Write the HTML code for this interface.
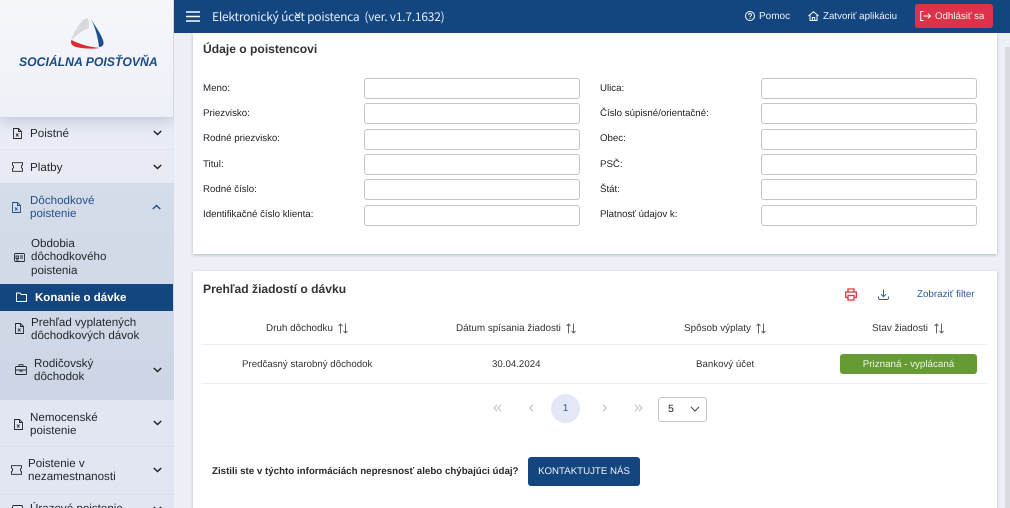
<!DOCTYPE html>
<html lang="sk"><head><meta charset="utf-8"><title>Elektronický účet poistenca</title>
<style>
*{box-sizing:border-box;text-rendering:geometricPrecision}
html,body{margin:0;padding:0;width:1010px;height:508px;overflow:hidden}
body{position:relative;background:#eef0f7;font-family:"Liberation Sans",sans-serif;color:#222}
.a{position:absolute}
.t{position:absolute;white-space:nowrap}
.side{position:absolute;left:0;top:0;width:174px;height:508px;background:#e4e8f3;overflow:hidden}
.logo{position:absolute;left:0;top:0;width:173px;height:117px;background:linear-gradient(180deg,#f6f7fb,#eef0f7);box-shadow:0 4px 14px rgba(90,100,130,.28)}
.nt{font-size:11.6px;line-height:13.4px;position:absolute;color:#25272c;white-space:nowrap}
.lab{position:absolute;font-size:9.7px;color:#222;white-space:nowrap;line-height:12px;margin-top:.7px}
.inp{position:absolute;width:216px;height:21px;background:#fff;border:1px solid #c3c5c9;border-radius:3px}
.card{position:absolute;left:193px;width:804px;background:#fff;box-shadow:0 1px 3px rgba(70,80,110,.35)}
.th{position:absolute;font-size:9.9px;color:#333;white-space:nowrap;line-height:12px}
.td{position:absolute;font-size:9.7px;color:#333;white-space:nowrap;line-height:12px}
svg{position:absolute;overflow:visible}
</style></head><body>

<div class="card" style="top:33px;height:221px"></div>
<div class="card" style="top:271px;height:240px"></div>
<div class="a" style="left:1005px;top:47px;width:5px;height:461px;background:#d9dbe1"></div>

<div class="a" style="left:173px;top:0;width:837px;height:33px;background:#13457f"></div>
<svg style="left:186px;top:11px" width="14" height="11" fill="none" stroke="#fff" stroke-width="1.6"><path d="M0 1h14M0 5.500h14M0 10h14"/></svg>
<div class="t" style="left:212px;top:9px;font-size:12px;letter-spacing:-.23px;line-height:15px;color:#e4ebf5;font-family:'Noto Sans CJK SC','Liberation Sans',sans-serif">Elektronický účet poistenca&nbsp; (ver. v1.7.1632)</div>
<svg style="left:745px;top:11px" width="10" height="10" fill="none" stroke="#fff" stroke-width="1"><circle cx="5" cy="5" r="4.500"/><path d="M3.600 4c0-2 2.900-1.900 2.900-.1 0 1.100-1.500 1.100-1.500 2.300M5 7.100v.8"/></svg>
<div class="t" style="left:759px;top:10px;font-size:10px;line-height:14px;color:#eef2f8">Pomoc</div>
<svg style="left:808px;top:11px" width="11" height="10" fill="none" stroke="#fff" stroke-width="1"><path d="M.5 5 5.500.8 10.500 5M2 4v5.500h7V4M4.300 9.500V6.500h2.400v3"/></svg>
<div class="t" style="left:823px;top:10px;font-size:9.750px;line-height:14px;color:#eef2f8">Zatvoriť aplikáciu</div>
<div class="a" style="left:915px;top:4px;width:78px;height:24px;background:#dd3249;border-radius:3px"></div>
<svg style="left:920px;top:11px" width="11" height="10" fill="none" stroke="#fff" stroke-width="1"><path d="M3.500.5H.7v9h2.800M3.500 5h7M8 2.700 10.500 5 8 7.300"/></svg>
<div class="t" style="left:935px;top:10px;font-size:9.700px;line-height:14px;color:#f8eef0">Odhlásiť sa</div>

<div class="side">
  <div class="a" style="left:0;top:117px;width:173px;height:33px;background:#e9ecf5;border-bottom:1px solid #e1e4ee"></div>
  <div class="a" style="left:0;top:150px;width:173px;height:33px;background:#e8ebf4"></div>
  <div class="a" style="left:0;top:183px;width:174px;height:217px;background:linear-gradient(180deg,#d5dcea,#cdd6e5)"></div>
  <div class="a" style="left:0;top:400px;width:174px;height:108px;background:#e2e5f2"></div>
  <div class="a" style="left:0;top:446px;width:174px;height:1px;background:#dadeeb"></div>
  <div class="a" style="left:0;top:494px;width:174px;height:1px;background:#dadeeb"></div>
  <div class="a" style="left:0;top:284px;width:173px;height:27px;background:#13457f"></div>
  <div class="logo"></div>
  <svg style="left:69px;top:17px" width="36" height="33">
    <path d="M18 1C12 3 5 14 2 24 7 18 13 14 19.500 11 20.500 7 20 3 18 1z" fill="#d7d9de"/>
    <path d="M22 2C26 9 33 18 34.500 25 35 28 33 30 30 30 29 20 26 10 22 2z" fill="#1f4d8e"/>
    <path d="M2.500 23C1 26 3 29 7 30 15 32 24 32 31 31 20 30 10 27 2.500 23z" fill="#dd2a30"/>
  </svg>
  <div class="t" style="left:19px;top:55px;font-size:12.5px;line-height:15px;font-weight:700;font-style:italic;color:#1b4a85;transform:scaleX(.977);transform-origin:0 0">SOCIÁLNA POISŤOVŇA</div>

  <svg style="left:13px;top:128px" width="9" height="11" fill="none" stroke="#25272c" stroke-width=".9"><path d="M.5.500h5l3 3v7h-8zM5.500.500v3h3M3 5.500l2.500 3M5.500 5.500 3 8.500"/></svg>
  <div class="t" style="left:30px;top:126px;font-size:11.700px;line-height:15px;color:#25272c">Poistné</div>
  <svg style="left:153px;top:130px" width="9" height="6" fill="none" stroke="#222" stroke-width="1.500"><path d="M.8 1 4.500 4.500 8.200 1"/></svg>

  <svg style="left:12px;top:162px" width="11" height="10" fill="none" stroke="#25272c" stroke-width=".9"><path d="M.5.700h10v2.500c-1.500.4-1.500 2.900 0 3.300v2.800H.5V6.500c1.500-.4 1.500-2.900 0-3.300z"/></svg>
  <div class="t" style="left:30px;top:160px;font-size:11.700px;line-height:15px;color:#25272c">Platby</div>
  <svg style="left:153px;top:164px" width="9" height="6" fill="none" stroke="#222" stroke-width="1.500"><path d="M.8 1 4.500 4.500 8.200 1"/></svg>

  <svg style="left:12px;top:202px" width="9" height="11" fill="none" stroke="#24508a" stroke-width=".9"><path d="M.5.500h5l3 3v7h-8zM5.500.500v3h3M3 5.500l2.500 3M5.500 5.500 3 8.500"/></svg>
  <div class="nt" style="left:30px;top:194px;color:#24508a">Dôchodkové<br>poistenie</div>
  <svg style="left:152px;top:204px" width="9" height="6" fill="none" stroke="#24508a" stroke-width="1.500"><path d="M.8 5 4.500 1.500 8.200 5"/></svg>

  <svg style="left:14px;top:253px" width="11" height="9" fill="none" stroke="#25272c" stroke-width=".9"><rect x=".5" y=".5" width="10" height="8" rx="1"/><path d="M2 3h2.500v2.500H2zM6 3h3M6 5h3M2 7h2.500"/></svg>
  <div class="nt" style="left:31px;top:237px">Obdobia<br>dôchodkového<br>poistenia</div>

  <svg style="left:16px;top:292px" width="11" height="10" fill="none" stroke="#fff" stroke-width="1"><path d="M.5 1h3.500l1.200 1.500h5.300v7H.5z"/></svg>
  <div class="t" style="left:35px;top:291px;font-size:11.500px;line-height:15px;font-weight:700;color:#fff">Konanie o dávke</div>

  <svg style="left:15px;top:323px" width="9" height="11" fill="none" stroke="#25272c" stroke-width=".9"><path d="M.5.500h5l3 3v7h-8zM5.500.500v3h3M3 5.500l2.500 3M5.500 5.500 3 8.500"/></svg>
  <div class="nt" style="left:31px;top:316px">Prehľad vyplatených<br>dôchodkových dávok</div>

  <svg style="left:15px;top:364px" width="12" height="11" fill="none" stroke="#25272c" stroke-width=".9"><rect x=".5" y="2.500" width="11" height="8" rx="1"/><path d="M4 2.500V.7h4v1.800M.5 6h11M5 6v1.200h2V6"/></svg>
  <div class="nt" style="left:34px;top:357px">Rodičovský<br>dôchodok</div>
  <svg style="left:153px;top:367px" width="9" height="6" fill="none" stroke="#222" stroke-width="1.500"><path d="M.8 1 4.500 4.500 8.200 1"/></svg>

  <svg style="left:14px;top:419px" width="9" height="11" fill="none" stroke="#25272c" stroke-width=".9"><path d="M.5.500h5l3 3v7h-8zM5.500.500v3h3M3 5.500l2.500 3M5.500 5.500 3 8.500"/></svg>
  <div class="nt" style="left:30px;top:411px">Nemocenské<br>poistenie</div>
  <svg style="left:153px;top:420px" width="9" height="6" fill="none" stroke="#222" stroke-width="1.500"><path d="M.8 1 4.500 4.500 8.200 1"/></svg>

  <svg style="left:11px;top:465px" width="11" height="10" fill="none" stroke="#25272c" stroke-width=".9"><path d="M.5.700h10v2.500c-1.500.4-1.500 2.900 0 3.300v2.800H.5V6.500c1.500-.4 1.500-2.900 0-3.300z"/></svg>
  <div class="nt" style="left:28px;top:457px">Poistenie v<br>nezamestnanosti</div>
  <svg style="left:153px;top:467px" width="9" height="6" fill="none" stroke="#222" stroke-width="1.500"><path d="M.8 1 4.500 4.500 8.200 1"/></svg>

  <svg style="left:12px;top:505px" width="11" height="10" fill="none" stroke="#25272c" stroke-width=".9"><rect x=".5" y=".5" width="10" height="9" rx="1"/></svg>
  <div class="t" style="left:30px;top:502px;font-size:11.600px;line-height:14px;color:#25272c">Úrazové poistenie</div>
  <svg style="left:153px;top:506px" width="9" height="6" fill="none" stroke="#222" stroke-width="1.500"><path d="M.8 1 4.500 4.500 8.200 1"/></svg>
</div>

<div class="t" style="left:203px;top:41px;font-size:12.100px;line-height:16px;font-weight:700;color:#333">Údaje o poistencovi</div>

<div class="lab" style="left:203px;top:82px">Meno:</div><div class="inp" style="left:364px;top:78px"></div>
<div class="lab" style="left:203px;top:107.500px">Priezvisko:</div><div class="inp" style="left:364px;top:103px"></div>
<div class="lab" style="left:203px;top:132.500px">Rodné priezvisko:</div><div class="inp" style="left:364px;top:129px"></div>
<div class="lab" style="left:203px;top:158px">Titul:</div><div class="inp" style="left:364px;top:154px"></div>
<div class="lab" style="left:203px;top:183px">Rodné číslo:</div><div class="inp" style="left:364px;top:179px"></div>
<div class="lab" style="left:203px;top:208px">Identifikačné číslo klienta:</div><div class="inp" style="left:364px;top:205px"></div>

<div class="lab" style="left:600px;top:82px">Ulica:</div><div class="inp" style="left:761px;top:78px"></div>
<div class="lab" style="left:600px;top:107.500px">Číslo súpisné/orientačné:</div><div class="inp" style="left:761px;top:103px"></div>
<div class="lab" style="left:600px;top:132.500px">Obec:</div><div class="inp" style="left:761px;top:129px"></div>
<div class="lab" style="left:600px;top:158px">PSČ:</div><div class="inp" style="left:761px;top:154px"></div>
<div class="lab" style="left:600px;top:183px">Štát:</div><div class="inp" style="left:761px;top:179px"></div>
<div class="lab" style="left:600px;top:208px">Platnosť údajov k:</div><div class="inp" style="left:761px;top:205px"></div>

<div class="t" style="left:203px;top:281px;font-size:12.100px;line-height:16px;font-weight:700;color:#333">Prehľad žiadostí o dávku</div>
<svg style="left:845px;top:288px" width="12" height="13" fill="none" stroke="#e0323f" stroke-width="1.300"><path d="M3 4V1h6v3M3 9.500H.7V4h10.600v5.500H9M3 7.500h6v4.500H3z"/></svg>
<svg style="left:878px;top:289px" width="11" height="12" fill="none" stroke="#2c5a93" stroke-width="1"><path d="M5.500.5v7M3 5.200l2.500 2.500L8 5.200M.5 7.500c0 1 0 3 1 3h8c1 0 1-2 1-3"/></svg>
<div class="t" style="left:917px;top:288px;font-size:9.800px;line-height:14px;color:#2c5a93">Zobraziť filter</div>

<div class="th" style="left:266px;top:323px">Druh dôchodku</div>
<svg style="left:338px;top:323px" width="10" height="11" fill="none" stroke="#666" stroke-width="1"><path d="M2.500 10.500V1M.5 3l2-2 2 2M7.500.5V10M5.500 8l2 2 2-2"/></svg>
<div class="th" style="left:456px;top:323px">Dátum spísania žiadosti</div>
<svg style="left:566px;top:323px" width="10" height="11" fill="none" stroke="#666" stroke-width="1"><path d="M2.500 10.500V1M.5 3l2-2 2 2M7.500.5V10M5.500 8l2 2 2-2"/></svg>
<div class="th" style="left:684px;top:323px">Spôsob výplaty</div>
<svg style="left:756px;top:323px" width="10" height="11" fill="none" stroke="#666" stroke-width="1"><path d="M2.500 10.500V1M.5 3l2-2 2 2M7.500.5V10M5.500 8l2 2 2-2"/></svg>
<div class="th" style="left:872px;top:323px">Stav žiadosti</div>
<svg style="left:934px;top:323px" width="10" height="11" fill="none" stroke="#666" stroke-width="1"><path d="M2.500 10.500V1M.5 3l2-2 2 2M7.500.5V10M5.500 8l2 2 2-2"/></svg>
<div class="a" style="left:203px;top:344px;width:784px;height:1px;background:#eceef1"></div>
<div class="a" style="left:203px;top:383px;width:784px;height:1px;background:#eceef1"></div>
<div class="td" style="left:242px;top:359px">Predčasný starobný dôchodok</div>
<div class="td" style="left:492px;top:359px">30.04.2024</div>
<div class="td" style="left:696px;top:359px">Bankový účet</div>
<div class="a" style="left:840px;top:354px;width:137px;height:20px;background:#659a34;border-radius:3px;color:#eef5e6;font-size:9.800px;line-height:21px;text-align:center">Priznaná - vyplácaná</div>

<svg style="left:493px;top:404px" width="9" height="8" fill="none" stroke="#a9aebb" stroke-width=".8"><path d="M4 .8 1 4l3 3.200M8 .8 5 4l3 3.200"/></svg>
<svg style="left:529px;top:404px" width="5" height="8" fill="none" stroke="#a9aebb" stroke-width=".8"><path d="M4 .8 1 4l3 3.200"/></svg>
<div class="a" style="left:551px;top:394px;width:29px;height:29px;border-radius:50%;background:#e4e7f5;color:#2c5a93;font-size:10px;line-height:29px;text-align:center">1</div>
<svg style="left:602px;top:404px" width="5" height="8" fill="none" stroke="#a9aebb" stroke-width=".8"><path d="M1 .8 4 4 1 7.200"/></svg>
<svg style="left:634px;top:404px" width="9" height="8" fill="none" stroke="#a9aebb" stroke-width=".8"><path d="M1 .8 4 4 1 7.200M5 .8 8 4 5 7.200"/></svg>
<div class="a" style="left:658px;top:397px;width:49px;height:25px;border:1px solid #c3c5c9;border-radius:3px;background:#fff"></div>
<div class="t" style="left:668px;top:402px;font-size:10.600px;line-height:14px;color:#222">5</div>
<svg style="left:690px;top:406px" width="10" height="6" fill="none" stroke="#444" stroke-width="1"><path d="M.8.800 5 5 9.200.8"/></svg>

<div class="t" style="left:212px;top:465px;font-size:9.740px;line-height:13px;font-weight:700;color:#2a2a2a">Zistili ste v týchto informáciách nepresnosť alebo chýbajúci údaj?</div>
<div class="a" style="left:528px;top:457px;width:112px;height:29px;background:#13457f;border-radius:3px;color:#eef2f8;font-size:9.700px;line-height:29px;text-align:center">KONTAKTUJTE NÁS</div>

</body></html>
